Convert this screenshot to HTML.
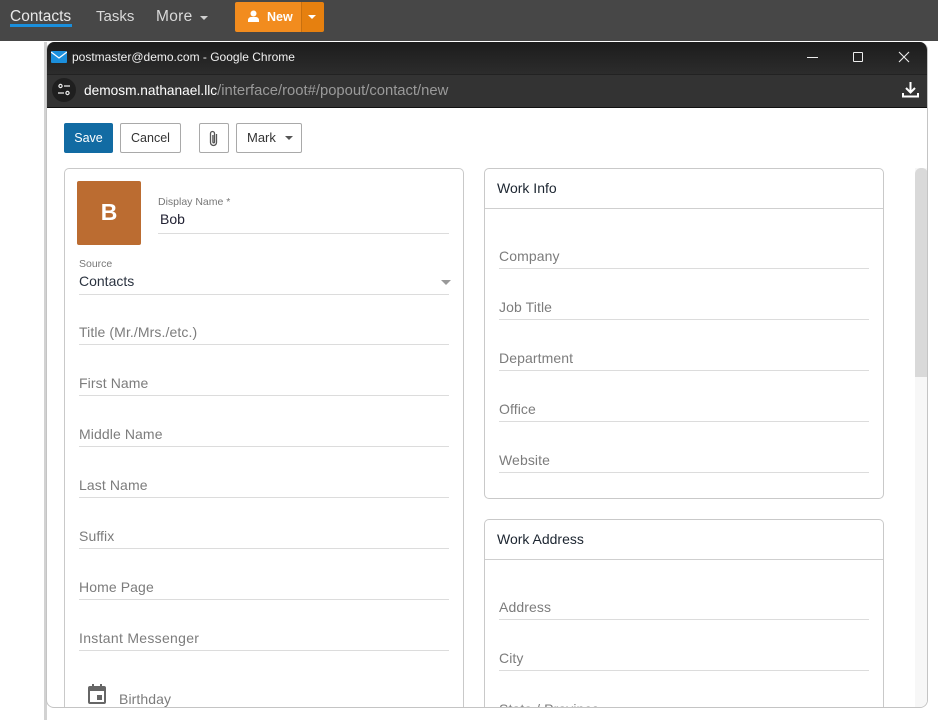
<!DOCTYPE html>
<html><head><meta charset="utf-8">
<style>
*{box-sizing:border-box}
html,body{margin:0;padding:0;width:938px;height:720px;overflow:hidden;background:#fff;font-family:"Liberation Sans",sans-serif}
.a{position:absolute;white-space:nowrap}
.bar{left:0;top:0;width:938px;height:41px;background:#474747}
.nav{top:8px;font-size:15.5px;color:#d9d9d9;line-height:18px}
.win{left:46px;top:42px;width:882px;height:666px;border:1px solid #c4c4c4;border-top:0;border-radius:8px 8px 8px 8px;overflow:hidden;background:#fff}
.lab{font-size:14px;color:#7c7c7c;line-height:16px;letter-spacing:.1px}
.line{height:1px;background:#dcdcdc}
.box{border:1px solid #c9c9c9;border-radius:5px;background:#fff}
.btn{border:1px solid #a9a9a9;border-radius:2px;background:#fff;font-size:12.5px;color:#333;text-align:center;height:30px;line-height:28px}
</style></head><body>
<div class="a bar"></div>
<div class="a nav" style="left:10px;color:#e8e8e8">Contacts</div>
<div class="a" style="left:10px;top:24px;width:62px;height:3px;background:#1a8fdc"></div>
<div class="a nav" style="left:96px;font-size:15px">Tasks</div>
<div class="a nav" style="left:156px;letter-spacing:.3px">More</div>
<div class="a" style="left:200px;top:16px;width:0;height:0;border:4px solid transparent;border-top:4px solid #d0d0d0"></div>
<div class="a" style="left:235px;top:2px;width:66px;height:30px;background:#f28c1e;border-radius:2px 0 0 2px"></div>
<div class="a" style="left:301px;top:2px;width:23px;height:30px;background:#e6800f;border-left:1px solid #c8700f;border-radius:0 2px 2px 0"></div>
<svg class="a" style="left:247px;top:10px" width="13" height="13" viewBox="0 0 13 13"><circle cx="6.5" cy="3.5" r="3" fill="#fff"/><path d="M1 12v-2c0-2 2-3 3-3h5c1 0 3 1 3 3v2z" fill="#fff"/></svg>
<div class="a" style="left:267px;top:9px;font-size:12.5px;font-weight:bold;color:#fff;line-height:16px">New</div>
<div class="a" style="left:308px;top:15px;width:0;height:0;border:4px solid transparent;border-top:4px solid #fff"></div>

<div class="a" style="left:44px;top:42px;width:3px;height:678px;background:#d2d2d2"></div>
<div class="a win">
  <div class="a" style="left:0;top:0;width:882px;height:32px;background:linear-gradient(#1c1c1c,#2c2c2c)"></div>
  <svg class="a" style="left:4px;top:9px" width="16" height="12" viewBox="0 0 16 12"><rect width="16" height="12" rx="1" fill="#1b8fdc"/><path d="M0 1l8 6 8-6" fill="none" stroke="#fff" stroke-width="1.2"/></svg>
  <div class="a" style="left:25px;top:8px;font-size:12px;color:#f0f0f0;line-height:15px">postmaster@demo.com - Google Chrome</div>
  <div class="a" style="left:760px;top:15px;width:11px;height:1px;background:#eee"></div>
  <div class="a" style="left:806px;top:10px;width:10px;height:10px;border:1px solid #eee;border-radius:1px"></div>
  <svg class="a" style="left:851px;top:9px" width="12" height="12" viewBox="0 0 12 12"><path d="M1 1l10 10M11 1L1 11" stroke="#eee" stroke-width="1.1"/></svg>
  <div class="a" style="left:0;top:32px;width:882px;height:34px;background:#333;border-top:1px solid #222;border-bottom:1px solid #111"></div>
  <div class="a" style="left:5px;top:36px;width:24px;height:24px;border-radius:12px;background:#1f1f1f"></div>
  <svg class="a" style="left:10px;top:41px" width="14" height="14" viewBox="0 0 14 14" fill="none" stroke="#eee" stroke-width="1.2"><circle cx="3.5" cy="3" r="1.6"/><path d="M7 3h6M1 10h6"/><circle cx="10.5" cy="10" r="1.6"/></svg>
  <div class="a" style="left:37px;top:41px;font-size:13.7px;line-height:16px;color:#fff">demosm.nathanael.llc<span style="color:#9a9a9a;font-size:14.8px">/interface/root#/popout/contact/new</span></div>
  <svg class="a" style="left:855px;top:39px" width="17" height="17" viewBox="0 0 17 17" fill="none" stroke="#fff" stroke-width="2"><path d="M8.5 1v10M4 7l4.5 4.5L13 7M1 12v3.5h15V12"/></svg>

  <div class="a" style="left:17px;top:81px;width:49px;height:30px;background:#126ba3;border-radius:2px;color:#fff;font-size:12.5px;text-align:center;line-height:30px">Save</div>
  <div class="a btn" style="left:73px;top:81px;width:61px">Cancel</div>
  <div class="a btn" style="left:152px;top:81px;width:30px"></div>
  <svg class="a" style="left:160px;top:88px" width="13" height="17" viewBox="0 0 13 17" fill="none" stroke="#555" stroke-width="1.3"><path d="M9.5 4v8.5a3 3 0 0 1-6 0V3.5a2 2 0 0 1 4 0V12a.8.8 0 0 1-1.6 0V5"/></svg>
  <div class="a btn" style="left:189px;top:81px;width:66px;text-align:left;padding-left:10px;font-size:13px">Mark</div>
  <div class="a" style="left:238px;top:94px;width:0;height:0;border:4px solid transparent;border-top:4px solid #555"></div>

  <!-- left card -->
  <div class="a box" style="left:17px;top:126px;width:400px;height:540px;border-bottom:0;border-radius:5px 5px 0 0"></div>
  <div class="a" style="left:30px;top:139px;width:64px;height:64px;background:#bb6c31;border-radius:2px;color:#fff;font-weight:bold;font-size:23px;text-align:center;line-height:62px">B</div>
  <div class="a" style="left:111px;top:154px;font-size:10.5px;color:#777;line-height:13px">Display Name *</div>
  <div class="a" style="left:113px;top:169px;font-size:14px;color:#223;line-height:17px">Bob</div>
  <div class="a line" style="left:111px;top:191px;width:291px"></div>
  <div class="a" style="left:32px;top:216px;font-size:10.5px;color:#777;line-height:13px">Source</div>
  <div class="a" style="left:32px;top:231px;font-size:14px;color:#2b3340;line-height:17px">Contacts</div>
  <div class="a" style="left:394px;top:238px;width:0;height:0;border:5px solid transparent;border-top:5px solid #999"></div>
  <div class="a line" style="left:32px;top:252px;width:370px"></div>

  <div class="a lab" style="left:32px;top:282px">Title (Mr./Mrs./etc.)</div><div class="a line" style="left:32px;top:302px;width:370px"></div>
  <div class="a lab" style="left:32px;top:333px">First Name</div><div class="a line" style="left:32px;top:353px;width:370px"></div>
  <div class="a lab" style="left:32px;top:384px">Middle Name</div><div class="a line" style="left:32px;top:404px;width:370px"></div>
  <div class="a lab" style="left:32px;top:435px">Last Name</div><div class="a line" style="left:32px;top:455px;width:370px"></div>
  <div class="a lab" style="left:32px;top:486px">Suffix</div><div class="a line" style="left:32px;top:506px;width:370px"></div>
  <div class="a lab" style="left:32px;top:537px">Home Page</div><div class="a line" style="left:32px;top:557px;width:370px"></div>
  <div class="a lab" style="left:32px;top:588px;letter-spacing:.3px">Instant Messenger</div><div class="a line" style="left:32px;top:608px;width:370px"></div>
  <svg class="a" style="left:41px;top:642px" width="18" height="20" viewBox="0 0 18 20"><path d="M4 0h2v2h6V0h2v2h2a2 2 0 0 1 2 2v14a2 2 0 0 1-2 2H2a2 2 0 0 1-2-2V4a2 2 0 0 1 2-2h2z" fill="#666"/><rect x="2" y="7" width="14" height="11" fill="#fff"/><rect x="9" y="11" width="5" height="5" fill="#666"/></svg>
  <div class="a lab" style="left:72px;top:649px">Birthday</div>

  <!-- right cards -->
  <div class="a box" style="left:437px;top:126px;width:400px;height:331px"></div>
  <div class="a" style="left:450px;top:138px;font-size:14px;color:#1c2530;line-height:17px">Work Info</div>
  <div class="a" style="left:438px;top:166px;width:398px;height:1px;background:#cfcfcf"></div>
  <div class="a lab" style="left:452px;top:206px">Company</div><div class="a line" style="left:452px;top:226px;width:370px"></div>
  <div class="a lab" style="left:452px;top:257px">Job Title</div><div class="a line" style="left:452px;top:277px;width:370px"></div>
  <div class="a lab" style="left:452px;top:308px">Department</div><div class="a line" style="left:452px;top:328px;width:370px"></div>
  <div class="a lab" style="left:452px;top:359px">Office</div><div class="a line" style="left:452px;top:379px;width:370px"></div>
  <div class="a lab" style="left:452px;top:410px">Website</div><div class="a line" style="left:452px;top:430px;width:370px"></div>

  <div class="a box" style="left:437px;top:477px;width:400px;height:189px;border-bottom:0;border-radius:5px 5px 0 0"></div>
  <div class="a" style="left:450px;top:489px;font-size:14px;color:#1c2530;line-height:17px">Work Address</div>
  <div class="a" style="left:438px;top:517px;width:398px;height:1px;background:#cfcfcf"></div>
  <div class="a lab" style="left:452px;top:557px">Address</div><div class="a line" style="left:452px;top:577px;width:370px"></div>
  <div class="a lab" style="left:452px;top:608px">City</div><div class="a line" style="left:452px;top:628px;width:370px"></div>
  <div class="a lab" style="left:452px;top:659px;height:7px;overflow:hidden">State / Province</div>

  <div class="a" style="left:868px;top:126px;width:13px;height:540px;background:#f7f7f7"></div>
  <div class="a" style="left:868px;top:126px;width:13px;height:209px;background:#d9d9d9;border-radius:6px 6px 0 0"></div>
</div>
</body></html>
